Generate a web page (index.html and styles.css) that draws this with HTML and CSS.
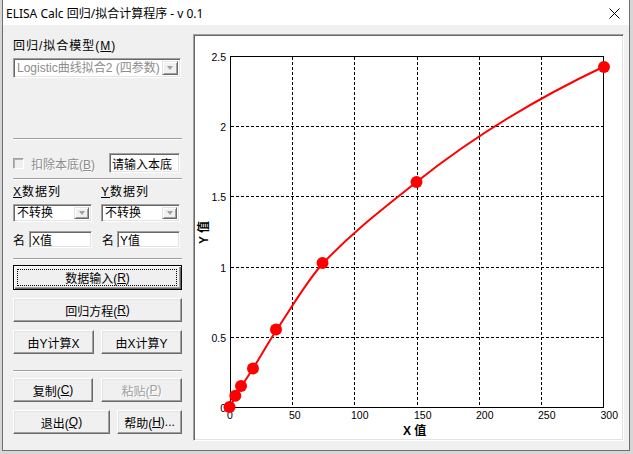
FILE: index.html
```html
<!DOCTYPE html>
<html lang="zh">
<head>
<meta charset="utf-8">
<title>ELISA Calc</title>
<link rel="stylesheet" href="styles.css">
</head>
<body>
<div class="window">
  <div class="titlebar">
    <span class="title">ELISA Calc 回归/拟合计算程序 - v 0.1</span>
    <svg class="close" width="11" height="11" viewBox="0 0 11 11"><path d="M0.5 0.5L10.5 10.5M10.5 0.5L0.5 10.5" stroke="#000" stroke-width="1" fill="none"/></svg>
  </div>
  <div class="client">
    <div class="left">
      <div class="lbl lbl-model">回归/拟合模型(<u>M</u>)</div>
      <div class="combo combo-model"><span class="ctext gray">Logistic曲线拟合2 (四参数)</span><span class="dd"><i></i></span></div>
      <div class="sep sep1"></div>
      <div class="bgrow">
        <div class="chk"><span class="box"></span><span class="gray">扣除本底(<u>B</u>)</span></div>
        <div class="input input-bg">请输入本底</div>
      </div>
      <div class="sep sep2"></div>
      <div class="cols">
        <div class="col">
          <div class="lbl"><u>X</u>数据列</div>
          <div class="combo combo-small"><span class="ctext">不转换</span><span class="dd"><i></i></span></div>
          <div class="namerow"><span class="nm">名</span><div class="input input-name">X值</div></div>
        </div>
        <div class="col">
          <div class="lbl"><u>Y</u>数据列</div>
          <div class="combo combo-small"><span class="ctext">不转换</span><span class="dd"><i></i></span></div>
          <div class="namerow"><span class="nm nm2">名</span><div class="input input-name">Y值</div></div>
        </div>
      </div>
      <div class="sep sep3"></div>
      <div class="btn default btn-data">数据输入(<u>R</u>)</div>
      <div class="btn btn-reg">回归方程(<u>R</u>)</div>
      <div class="btnrow row3">
        <div class="btn w81">由Y计算X</div>
        <div class="btn w81">由X计算Y</div>
      </div>
      <div class="sep sep4"></div>
      <div class="btnrow row4">
        <div class="btn w80">复制(<u>C</u>)</div>
        <div class="btn w81 disabled">粘贴(<u>P</u>)</div>
      </div>
      <div class="btnrow row5">
        <div class="btn w97">退出(<u>Q</u>)</div>
        <div class="btn w65">帮助(<u>H</u>)...</div>
      </div>
    </div>
    <div class="panel">
      <svg class="chart" width="427" height="403" viewBox="195 36 427 403">
        <path class="grid" d="M292.5 57V407M354.5 57V407M417.5 57V407M479.5 57V407M541.5 57V407M231 126.5H603M231 196.5H603M231 267.5H603M231 337.5H603"/>
        <rect class="frame" x="230.5" y="56.5" width="373" height="351"/>
        <g class="ticks ylab">
          <text x="226" y="61">2.5</text>
          <text x="226" y="131">2</text>
          <text x="226" y="201">1.5</text>
          <text x="226" y="272">1</text>
          <text x="226" y="342">0.5</text>
          <text x="226" y="411.5">0</text>
        </g>
        <g class="ticks xlab">
          <text x="227" y="419">0</text>
          <text x="289" y="419">50</text>
          <text x="351" y="419">100</text>
          <text x="414" y="419">150</text>
          <text x="476" y="419">200</text>
          <text x="538" y="419">250</text>
          <text x="600.5" y="419">300</text>
        </g>
        <path class="curve" d="M230,407 C231.93,403.33 233.87,399.46 235.8,396 C237.77,392.47 239.73,389.15 241.7,386 C245.57,379.81 249.43,374.19 253.3,368 C261.07,355.57 268.83,341.65 276.6,330 C292.17,306.65 307.73,279.5 323.3,263 C354.37,230.07 385.43,206.86 416.5,182 C478.67,132.3 540.83,96.5 603,67"/>
        <g class="pts">
          <circle cx="229.5" cy="407" r="6"/>
          <circle cx="235.3" cy="395.8" r="6"/>
          <circle cx="241" cy="386" r="6"/>
          <circle cx="253" cy="368.5" r="6"/>
          <circle cx="276" cy="329.5" r="6"/>
          <circle cx="322.5" cy="263" r="6"/>
          <circle cx="416.5" cy="182" r="6"/>
          <circle cx="604" cy="67" r="6"/>
        </g>
        <text class="axtitle" x="403" y="435">X 值</text>
        <text class="axtitle" transform="translate(208 244) rotate(-90)">Y 值</text>
      </svg>
    </div>
  </div>
</div>
</body>
</html>
```
FILE: styles.css
```css
* { box-sizing: border-box; }
html, body { margin: 0; padding: 0; }
body {
  width: 633px;
  height: 454px;
  overflow: hidden;
  background: #d6d6d6;
  font-family: "Liberation Sans", "Noto Sans CJK SC", sans-serif;
  font-size: 12px;
  color: #000;
}
u { text-decoration: underline; text-underline-offset: 1px; }

.window {
  margin-left: 2px;
  width: 628px;
  height: 451px;
  border: 1px solid #6f6f6f;
  border-top: none;
  background: #f0f0f0;
  display: flex;
  flex-direction: column;
}
.titlebar {
  height: 25px;
  flex: none;
  background: #fff;
  display: flex;
  align-items: center;
  justify-content: space-between;
  padding: 0 9px 0 3px;
  font-family: "Noto Sans", "Noto Sans CJK SC", sans-serif;
  font-size: 12px;
  white-space: nowrap;
}
.close { display: block; margin-top: 1px; }

.client {
  flex: 1;
  display: flex;
  padding: 9px 5px 9px 10px;
}
.left {
  width: 169px;
  flex: none;
  display: flex;
  flex-direction: column;
}
.lbl {
  height: 14px;
  line-height: 14px;
  letter-spacing: 1px;
  white-space: nowrap;
}
.lbl-model { margin-top: 5px; }
.gray { color: #8c8c8c; }

.combo {
  display: flex;
  align-items: stretch;
  background: #fff;
  border: 1px solid;
  border-color: #a0a0a0 #fff #fff #a0a0a0;
  box-shadow: inset 1px 1px #696969, inset -1px -1px #e3e3e3;
  padding: 2px;
}
.combo-model { margin-top: 5px; width: 168px; height: 20px; }
.combo-small { margin-top: 5px; width: 79px; height: 18px; }
.ctext {
  flex: 1;
  padding-left: 1px;
  white-space: nowrap;
  display: flex;
  align-items: center;
  line-height: 14px;
}
.dd {
  width: 16px;
  flex: none;
  background: #f0f0f0;
  border: 1px solid;
  border-color: #e3e3e3 #696969 #696969 #e3e3e3;
  box-shadow: inset 1px 1px #fff, inset -1px -1px #a0a0a0;
  display: flex;
  align-items: center;
  justify-content: center;
}
.combo-small .dd { width: 15px; }
.dd i {
  display: block;
  width: 0;
  height: 0;
  border-left: 3.5px solid transparent;
  border-right: 3.5px solid transparent;
  border-top: 4px solid #a0a0a0;
}

.sep {
  height: 2px;
  flex: none;
  border-top: 1px solid #a0a0a0;
  border-bottom: 1px solid #fff;
}
.sep1 { margin-top: 60px; }
.sep2 { margin-top: 5px; }
.sep3 { margin-top: 10px; }
.sep4 { margin-top: 16px; }

.bgrow {
  margin-top: 13px;
  height: 20px;
  display: flex;
  align-items: center;
  justify-content: space-between;
  padding-right: 2px;
}
.chk { display: flex; align-items: center; white-space: nowrap; }
.box {
  width: 11px;
  height: 11px;
  margin-right: 7px;
  border: 1px solid;
  border-color: #a0a0a0 #fff #fff #a0a0a0;
  box-shadow: inset 1px 1px #b4b4b4;
  background: #f0f0f0;
}
.chk .gray { text-shadow: 1px 1px #fff; }

.input {
  background: #fff;
  border: 1px solid;
  border-color: #a0a0a0 #fff #fff #a0a0a0;
  box-shadow: inset 1px 1px #696969, inset -1px -1px #e3e3e3;
  padding: 0 2px;
  display: flex;
  align-items: center;
  white-space: nowrap;
  overflow: hidden;
}
.input-bg { width: 71px; height: 20px; }
.input-name { width: 63px; height: 17px; }

.cols {
  margin-top: 5px;
  display: grid;
  grid-template-columns: 79px 81px;
  column-gap: 9px;
}
.col { display: flex; flex-direction: column; }
.namerow { margin-top: 9px; display: flex; align-items: center; }
.nm { width: 16px; flex: none; }
.nm2 { padding-left: 1px; }

.btn {
  position: relative;
  height: 24px;
  flex: none;
  display: flex;
  align-items: center;
  justify-content: center;
  background: #f0f0f0;
  border: 1px solid;
  border-color: #fff #696969 #696969 #fff;
  box-shadow: inset -1px -1px #a0a0a0, inset 1px 1px #e3e3e3;
  white-space: nowrap;
}
.btn.default {
  border-color: #000;
  box-shadow: inset 1px 1px #fff, inset -1px -1px #696969, inset -2px -2px #a0a0a0;
}
.btn.default::after {
  content: "";
  position: absolute;
  top: 3px;
  left: 3px;
  right: 4px;
  bottom: 3px;
  border: 1px dotted #000;
}
.btn.disabled { color: #a0a0a0; text-shadow: 1px 1px #fff; }
.btn-data { margin-top: 5px; height: 25px; }
.btn-reg { margin-top: 8px; }
.btnrow { display: flex; justify-content: space-between; }
.row3 { margin-top: 8px; }
.row4 { margin-top: 6px; }
.row5 { margin-top: 8px; }
.w80 { width: 80px; }
.w81 { width: 81px; }
.w97 { width: 97px; }
.w65 { width: 65px; }

.panel {
  width: 431px;
  height: 407px;
  flex: none;
  margin-left: 11px;
  background: #fff;
  border: 1px solid;
  border-color: #a0a0a0 #fff #fff #a0a0a0;
  box-shadow: inset 1px 1px #696969, inset -1px -1px #e3e3e3;
  padding: 1px;
}
.chart { display: block; }
.grid {
  fill: none;
  stroke: #000;
  stroke-width: 1;
  stroke-dasharray: 3 2;
  shape-rendering: crispEdges;
}
.frame {
  fill: none;
  stroke: #000;
  stroke-width: 1;
  shape-rendering: crispEdges;
}
.ticks {
  font-family: "Liberation Sans", sans-serif;
  font-size: 10.5px;
  fill: #000;
}
.ylab { text-anchor: end; }
.xlab { text-anchor: start; }
.curve {
  fill: none;
  stroke: #ff0000;
  stroke-width: 2;
}
.pts { fill: #ff0000; }
.axtitle {
  font-family: "Liberation Sans", "Noto Sans CJK SC", sans-serif;
  font-size: 12px;
  font-weight: bold;
  fill: #000;
}
```
